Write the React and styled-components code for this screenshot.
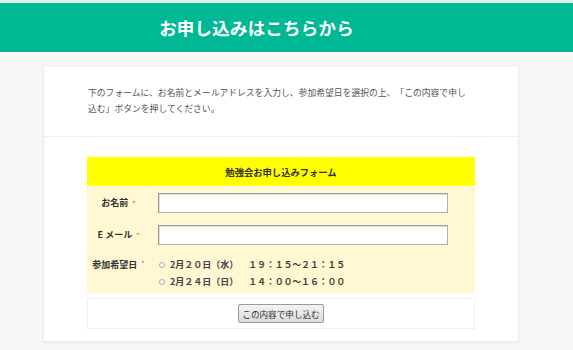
import styled, { createGlobalStyle } from "styled-components";

const GlobalStyle = createGlobalStyle`
  html, body {
    margin: 0;
    padding: 0;
    background: #f7f7f7;
    font-family: "Noto Sans CJK JP", "Noto Sans", sans-serif;
    color: #444;
    text-spacing-trim: space-all;
  }
`;

const dates = [
  { id: "d1", day: "2月２０日（水）", time: "１９：１５〜２１：１５" },
  { id: "d2", day: "2月２４日（日）", time: "１４：００〜１６：００" },
];

export default function App() {
  return (
    <>
      <GlobalStyle />
      <Page>
        <Header>お申し込みはこちらから</Header>
        <Card>
          <Intro>
            下のフォームに、お名前とメールアドレスを入力し、参加希望日を選択の上、「この内容で申し込む」ボタンを押してください。
          </Intro>
          <FormSection>
            <FormTable>
              <Caption>勉強会お申し込みフォーム</Caption>
              <Row>
                <Label>
                  お名前<Required>*</Required>
                </Label>
                <Field>
                  <TextInput type="text" />
                </Field>
              </Row>
              <Row>
                <Label>
                  E メール<Required>*</Required>
                </Label>
                <Field>
                  <TextInput type="email" />
                </Field>
              </Row>
              <Row $tall>
                <Label $top>
                  参加希望日<Required>*</Required>
                </Label>
                <Field $stack>
                  {dates.map((d) => (
                    <Choice key={d.id}>
                      <Radio type="radio" name="date" />
                      <span>{d.day}</span>
                      <Time>{d.time}</Time>
                    </Choice>
                  ))}
                </Field>
              </Row>
            </FormTable>
            <SubmitBox>
              <Submit type="button">この内容で申し込む</Submit>
            </SubmitBox>
          </FormSection>
        </Card>
      </Page>
    </>
  );
}

const Page = styled.div`
  width: 573px;
  height: 350px;
  overflow: hidden;
  border-top: 3px solid #e3eeeb;
  box-sizing: border-box;
`;

const Header = styled.h1`
  margin: 0;
  height: 49px;
  padding-right: 60px;
  background: #00b894;
  color: #fff;
  font-size: 17.5px;
  font-weight: 700;
  display: flex;
  align-items: center;
  justify-content: center;
  letter-spacing: 0.2px;
`;

const Card = styled.div`
  margin: 13px 0 0 43px;
  width: 476px;
  background: #fff;
  border: 1px solid #ececec;
  box-shadow: 0 1px 2px rgba(0, 0, 0, 0.05);
  box-sizing: border-box;
`;

const Intro = styled.p`
  margin: 0;
  padding: 19px 44px 19px 44px;
  font-size: 8.8px;
  line-height: 16px;
  color: #555;
  border-bottom: 1px solid #eeeeee;
`;

const FormSection = styled.div`
  padding: 20px 43px 12px 43px;
  display: flex;
  flex-direction: column;
  gap: 5px;
`;

const FormTable = styled.div`
  display: flex;
  flex-direction: column;
`;

const Caption = styled.div`
  height: 29px;
  background: #ffff00;
  display: flex;
  align-items: center;
  justify-content: center;
  font-size: 9.3px;
  font-weight: 700;
  color: #333;
`;

const Row = styled.div`
  display: grid;
  grid-template-columns: 64px 1fr;
  height: ${(p) => (p.$tall ? "43px" : "32px")};
  background: #fff8d2;
  border-top: 1px solid #fffbe8;
  box-sizing: border-box;
`;

const Label = styled.div`
  display: flex;
  align-items: ${(p) => (p.$top ? "flex-start" : "center")};
  justify-content: center;
  padding-top: ${(p) => (p.$top ? "7px" : "0")};
  font-size: 9px;
  font-weight: 700;
  color: #333;
  border-right: 1px solid #fffbe8;
  gap: 4px;
`;

const Required = styled.span`
  color: #e05050;
  font-size: 7px;
  font-weight: 400;
`;

const Field = styled.div`
  display: flex;
  flex-direction: ${(p) => (p.$stack ? "column" : "row")};
  align-items: ${(p) => (p.$stack ? "flex-start" : "center")};
  padding-left: 7px;
  padding-top: ${(p) => (p.$stack ? "5px" : "0")};
`;

const TextInput = styled.input`
  width: 290px;
  height: 20px;
  box-sizing: border-box;
  border: 1px solid #b0b0b0;
  border-top-color: #999;
  border-left-color: #999;
  box-shadow: inset 1px 1px 0 #dedede;
  background: #fff;
  outline: none;
`;

const Choice = styled.label`
  display: flex;
  align-items: center;
  height: 17px;
  font-size: 9px;
  font-weight: 600;
  color: #444;
`;

const Radio = styled.input`
  appearance: none;
  width: 6px;
  height: 6px;
  margin: 0 5px 0 1px;
  border: 1px solid #a8a8a8;
  border-radius: 50%;
  background: #fff;
`;

const Time = styled.span`
  margin-left: 10px;
  letter-spacing: -0.2px;
`;

const SubmitBox = styled.div`
  height: 31px;
  background: #fff;
  border: 1px solid #eeeeee;
  box-sizing: border-box;
  display: flex;
  align-items: center;
  justify-content: center;
`;

const Submit = styled.button`
  height: 19px;
  padding: 0 3px;
  font-family: inherit;
  font-size: 8.6px;
  color: #333;
  background: linear-gradient(#f3f3f3, #dcdcdc);
  border: 1px solid #9a9a9a;
  border-radius: 2px;
`;
